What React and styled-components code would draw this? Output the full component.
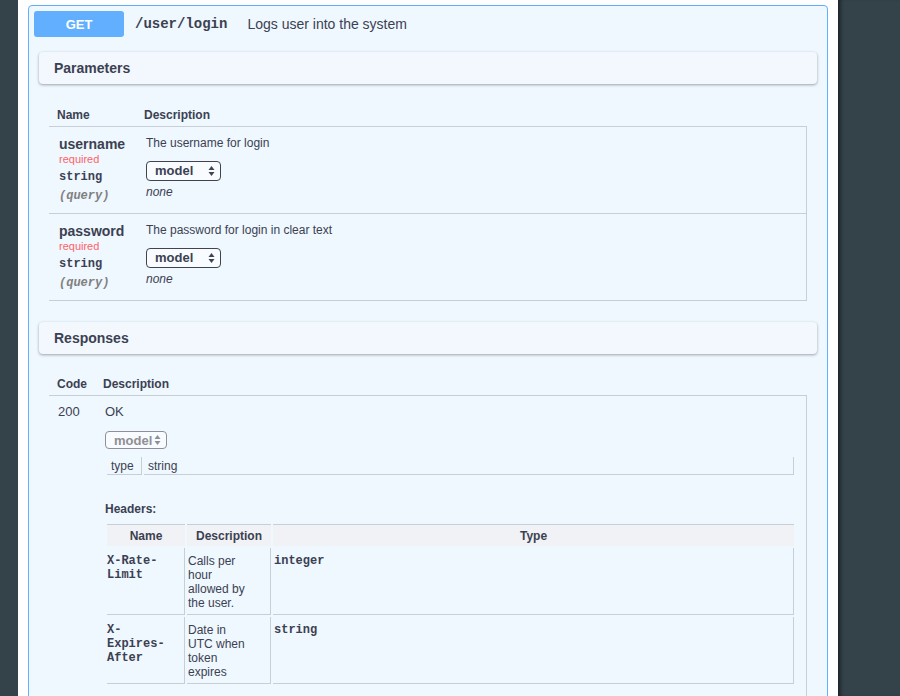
import React from "react";
import styled, { createGlobalStyle } from "styled-components";

const GlobalStyle = createGlobalStyle`
  body {
    margin: 0;
    background: #344249;
    font-family: "Liberation Sans", Arial, sans-serif;
    color: #3b4151;
    overflow: hidden;
  }
`;

const LINE = "#c8ced6";
const MONO = `"Liberation Mono", "Courier New", monospace`;

const Shell = styled.div`
  display: flex;
  height: 696px;
`;

const Rail = styled.div`
  flex: ${(p) => (p.$grow ? "1" : "0 0 18px")};
  background: #344249;
  box-shadow: ${(p) => (p.$grow ? "inset 5px 0 4px -3px rgba(0,0,0,.55)" : "none")};
`;

const Panel = styled.main`
  flex: 0 0 820px;
  box-sizing: border-box;
  background: #fff;
  padding: 5px 10px 0;
  overflow: hidden;
`;

const OpBlock = styled.section`
  border: 1px solid #61affe;
  border-radius: 4px;
  background: #eff7ff;
  padding-bottom: 40px;
`;

const Summary = styled.div`
  display: flex;
  align-items: center;
  padding: 5px;
`;

const Method = styled.span`
  width: 90px;
  height: 26px;
  border-radius: 3px;
  background: #61affe;
  color: #fff;
  font-weight: 700;
  font-size: 13px;
  display: flex;
  align-items: center;
  justify-content: center;
`;

const Path = styled.span`
  font-family: ${MONO};
  font-weight: 700;
  font-size: 14px;
  padding: 0 20px 0 11px;
`;

const SummaryText = styled.span`
  font-size: 14px;
`;

const Body = styled.div`
  padding-top: 10px;
`;

const SectionHeader = styled.div`
  margin: 0 10px;
  height: 32px;
  padding: 0 15px;
  display: flex;
  align-items: center;
  background: #f3f8ff;
  border-radius: 4px;
  box-shadow: 0 1px 3px rgba(0, 0, 0, 0.35);
  font-weight: 700;
  font-size: 14px;
`;

const TableWrap = styled.div`
  padding: 20px 20px 21px;
`;

const Table = styled.table`
  width: 100%;
  border-collapse: collapse;
  table-layout: fixed;
`;

const Th = styled.th`
  text-align: left;
  height: 22px;
  padding: 0 8px;
  font-size: 12px;
  font-weight: 700;
  border-bottom: 1px solid ${LINE};
  box-sizing: border-box;
  width: ${(p) => p.$w || "auto"};
`;

const Td = styled.td`
  vertical-align: top;
  padding: ${(p) => p.$pad || "9px 0 9px 10px"};
  border-bottom: ${(p) => (p.$noBottom ? "none" : `1px solid ${LINE}`)};
  border-right: ${(p) => (p.$last ? `1px solid ${LINE}` : "none")};
`;

const ParamName = styled.div`
  font-size: 14px;
  font-weight: 700;
  line-height: 17px;
`;

const Required = styled.div`
  font-size: 11px;
  line-height: 12px;
  color: #ff6366;
`;

const ParamType = styled.div`
  font-family: ${MONO};
  font-weight: 700;
  font-size: 12px;
  line-height: 16px;
  margin-top: 4px;
`;

const ParamIn = styled.div`
  font-family: ${MONO};
  font-weight: 700;
  font-style: italic;
  font-size: 12px;
  line-height: 16px;
  margin-top: 3px;
  color: #808080;
`;

const Text = styled.div`
  font-size: ${(p) => p.$size || "12px"};
  line-height: ${(p) => p.$lh || "14px"};
  margin-top: ${(p) => p.$mt || "0"};
  font-style: ${(p) => (p.$italic ? "italic" : "normal")};
  font-weight: ${(p) => (p.$bold ? 700 : 400)};
`;

const SelectBox = styled.div`
  position: relative;
  box-sizing: border-box;
  width: ${(p) => p.$w}px;
  height: ${(p) => p.$h}px;
  margin-top: ${(p) => p.$mt}px;
  border: 1px solid ${(p) => (p.$disabled ? "#8e9096" : "#41444e")};
  border-radius: 4px;
  background: rgba(255, 255, 255, 0.55);
  color: ${(p) => (p.$disabled ? "#8f9094" : "#3b4151")};
  font-size: 13px;
  font-weight: 700;
  display: flex;
  align-items: center;
  padding-left: 8px;
  svg {
    position: absolute;
    right: 5px;
    top: 50%;
    transform: translateY(-50%);
  }
`;

const Arrows = ({ color }) => (
  <svg width="7" height="11" viewBox="0 0 7 11">
    <path d="M3.5 0.5 L6.5 4.5 L0.5 4.5 Z" fill={color} />
    <path d="M3.5 10.5 L6.5 6.5 L0.5 6.5 Z" fill={color} />
  </svg>
);

const Select = ({ w, h, mt, disabled }) => (
  <SelectBox $w={w} $h={h} $mt={mt} $disabled={disabled}>
    model
    <Arrows color={disabled ? "#8f9094" : "#41444e"} />
  </SelectBox>
);

const Spaced = styled.table`
  width: 100%;
  border-collapse: separate;
  border-spacing: 2px;
  margin: ${(p) => p.$m || "0"};
  table-layout: fixed;
`;

const TypeCell = styled.td`
  height: 18px;
  box-sizing: border-box;
  padding: 0 5px 0 4px;
  font-size: 12px;
  border-right: 1px solid ${LINE};
  border-bottom: 1px solid ${LINE};
  width: ${(p) => p.$w || "auto"};
`;

const HeadTh = styled.th`
  height: 22px;
  box-sizing: border-box;
  background: #f1f2f5;
  border-top: 1px solid ${LINE};
  font-size: 12px;
  font-weight: 700;
  text-align: center;
  padding: 0;
  width: ${(p) => p.$w || "auto"};
`;

const HeadTd = styled.td`
  vertical-align: top;
  box-sizing: border-box;
  padding: 6px ${(p) => p.$pr || "2px"} 4px ${(p) => p.$pl || "1px"};
  border-right: 1px solid ${LINE};
  border-bottom: 1px solid ${LINE};
  font-size: 12px;
  line-height: 14px;
  font-family: ${(p) => (p.$mono ? MONO : "inherit")};
  font-weight: ${(p) => (p.$mono ? 700 : 400)};
`;

const params = [
  { name: "username", desc: "The username for login" },
  { name: "password", desc: "The password for login in clear text" },
];

const headers = [
  { name: "X-Rate-Limit", desc: "Calls per hour allowed by the user.", type: "integer" },
  { name: "X-Expires-After", desc: "Date in UTC when token expires", type: "string" },
];

export default function App() {
  return (
    <>
      <GlobalStyle />
      <Shell>
        <Rail />
        <Panel>
          <OpBlock>
            <Summary>
              <Method>GET</Method>
              <Path>/user/login</Path>
              <SummaryText>Logs user into the system</SummaryText>
            </Summary>
            <Body>
              <SectionHeader>Parameters</SectionHeader>
              <TableWrap>
                <Table>
                  <thead>
                    <tr>
                      <Th $w="87px">Name</Th>
                      <Th>Description</Th>
                    </tr>
                  </thead>
                  <tbody>
                    {params.map((p) => (
                      <tr key={p.name}>
                        <Td>
                          <ParamName>{p.name}</ParamName>
                          <Required>required</Required>
                          <ParamType>string</ParamType>
                          <ParamIn>(query)</ParamIn>
                        </Td>
                        <Td $last>
                          <Text>{p.desc}</Text>
                          <Select w={75} h={20} mt={11} />
                          <Text $italic $mt="4px">none</Text>
                        </Td>
                      </tr>
                    ))}
                  </tbody>
                </Table>
              </TableWrap>

              <SectionHeader>Responses</SectionHeader>
              <TableWrap>
                <Table>
                  <thead>
                    <tr>
                      <Th $w="46px">Code</Th>
                      <Th>Description</Th>
                    </tr>
                  </thead>
                  <tbody>
                    <tr>
                      <Td $pad="8px 0 0 9px">
                        <Text $size="13px" $lh="16px">200</Text>
                      </Td>
                      <Td $last $pad="8px 10px 30px 10px">
                        <Text $size="13px" $lh="16px">OK</Text>
                        <Select w={62} h={18} mt={11} disabled />
                        <Spaced $m="6px 0 0">
                          <tbody>
                            <tr>
                              <TypeCell $w="35px">type</TypeCell>
                              <TypeCell>string</TypeCell>
                            </tr>
                          </tbody>
                        </Spaced>
                        <Text $bold $mt="25px">Headers:</Text>
                        <Spaced $m="6px 0 0">
                          <thead>
                            <tr>
                              <HeadTh $w="78px">Name</HeadTh>
                              <HeadTh $w="84px">Description</HeadTh>
                              <HeadTh>Type</HeadTh>
                            </tr>
                          </thead>
                          <tbody>
                            {headers.map((h) => (
                              <tr key={h.name}>
                                <HeadTd $mono $pl="0" $pr="11px">{h.name}</HeadTd>
                                <HeadTd $pr="19px">{h.desc}</HeadTd>
                                <HeadTd $mono>{h.type}</HeadTd>
                              </tr>
                            ))}
                          </tbody>
                        </Spaced>
                      </Td>
                    </tr>
                  </tbody>
                </Table>
              </TableWrap>
            </Body>
          </OpBlock>
        </Panel>
        <Rail $grow />
      </Shell>
    </>
  );
}
